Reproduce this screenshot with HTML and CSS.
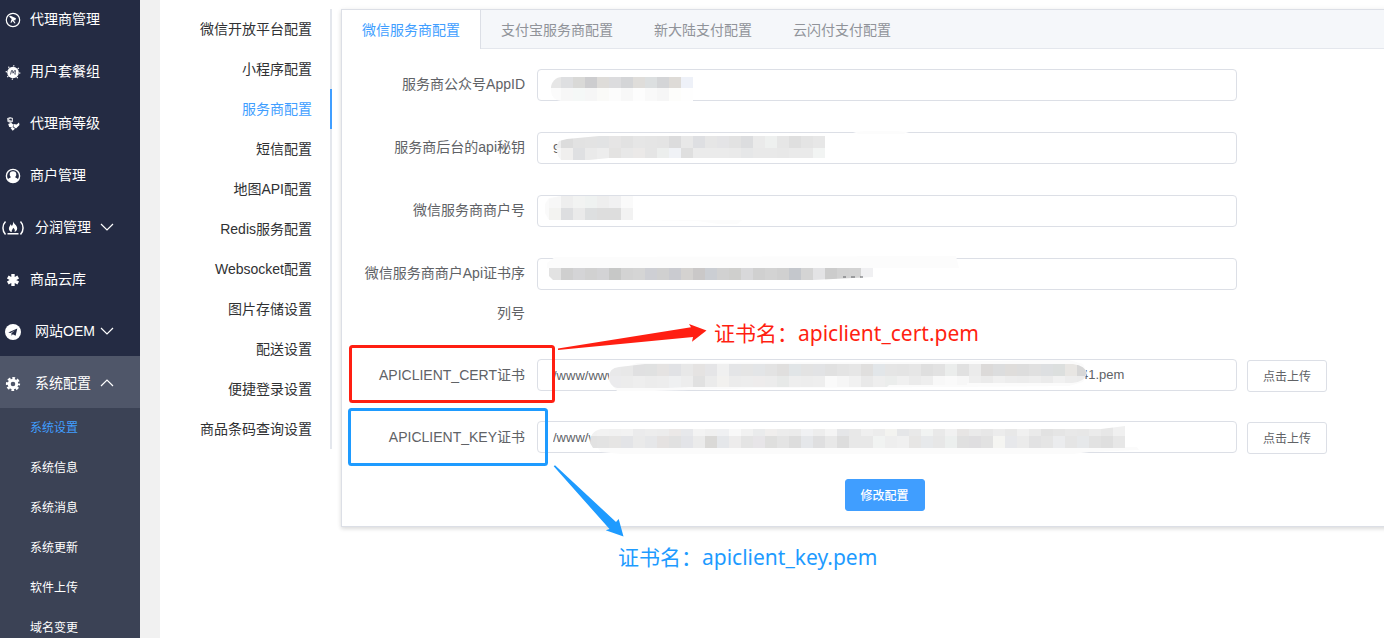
FILE: index.html
```html
<!DOCTYPE html>
<html lang="zh-CN">
<head>
<meta charset="utf-8">
<title>系统设置</title>
<link rel="stylesheet" href="styles.css">
</head>
<body>
<div class="app">
  <nav class="sidebar" aria-label="主菜单">
    <a class="item" href="#"><svg class="icon" viewBox="0 0 16 16"><circle cx="8" cy="8" r="6.7" fill="none" stroke="currentColor" stroke-width="1.2"/><path d="M4 4.500l1.500-.8 5.500 2.500-.8 2.300-1.700-.5 2 3-.7.500-2.300-2.500-1.300 2-.7-.5 1.200-3.500z" fill="currentColor"/></svg>代理商管理</a>
    <a class="item" href="#"><svg class="icon" viewBox="0 0 16 16"><circle cx="8" cy="8.500" r="5.800" fill="currentColor"/><circle cx="8" cy="8.500" r="6.700" fill="none" stroke="currentColor" stroke-width="1.300" stroke-dasharray="1.200 4.060"/><path d="M5.500 10.500l1-3.900 1.100 0 .4 2.600 1.500-2.600h1l-.7 3.600 1-.2" fill="none" stroke="#242b43" stroke-width=".8"/></svg>用户套餐组</a>
    <a class="item" href="#"><svg class="icon" viewBox="0 0 16 16"><path d="M2 2.200l3-1.200 3 1v3.700L5.400 7 2.500 5.800z" fill="currentColor" opacity=".8"/><path d="M3.200 8l3-1.200 2 1.700-.6 2.900-3.400-.4zM8.500 8l3.200.5 2.300-2 .5 2.500-3.500 3.500-2.500-1.800zM5.500 12l2.500-.8 2 1.500-2.300 2z" fill="currentColor"/><path d="M3.800 3.600l2.200-1 1 1-.5 1.200z" fill="#242b43"/></svg>代理商等级</a>
    <a class="item" href="#"><svg class="icon" viewBox="0 0 16 16"><circle cx="8" cy="8" r="6.600" fill="none" stroke="currentColor" stroke-width="1.400"/><path d="M8 3.200a3.300 3.300 0 0 1 3.300 3.300c0 1.200-.5 2-1.200 2.600 0 .9 2.400.8 3.100 2.600A6.500 6.500 0 0 1 8 14.600a6.500 6.500 0 0 1-5.200-2.900C3.500 9.900 5.900 10 5.900 9.100 5.200 8.500 4.700 7.700 4.700 6.500A3.300 3.300 0 0 1 8 3.200z" fill="currentColor"/></svg>商户管理</a>
    <a class="item group" href="#"><svg class="icon" viewBox="0 0 24 16"><path d="M4.500 1.500C1.100 5 1.100 11 4.500 14.500M19.500 1.500c3.400 3.500 3.400 9.500 0 13" fill="none" stroke="currentColor" stroke-width="1.500"/><path d="M12 1c.3 2.700 4.200 4 4.200 7.300 0 2-1.400 3.400-2.700 3.700.8-1.700.2-2.900-1.300-4.200-.2 1.600-2 2.200-1.400 4.200C9 11.600 7.800 10.300 7.900 8.400 8 6.600 9.300 6 9.500 4.300c.9.500 1.200 1.200 1.200 2C12.200 4.800 12.300 3 12 1zM6.500 13h11v1.600h-11z" fill="currentColor"/></svg>分润管理<svg class="chevron" viewBox="0 0 14 8"><path d="M1 1l6 6 6-6"/></svg></a>
    <a class="item" href="#"><svg class="icon" viewBox="0 0 16 16"><path d="M8 2v12M2.800 5l10.400 6M13.200 5L2.800 11" fill="none" stroke="currentColor" stroke-width="3.400"/></svg>商品云库</a>
    <a class="item group" href="#"><svg class="icon" viewBox="0 0 24 16"><circle cx="12" cy="8" r="8" fill="currentColor"/><path d="M7.300 8.400l9-3.900-1.700 7.300-2.800-1.500-1.200 1.500-.2-2.500 3.600-3-4.500 2.700z" fill="#242b43"/></svg>网站OEM<svg class="chevron" viewBox="0 0 14 8"><path d="M1 1l6 6 6-6"/></svg></a>
    <a class="item group open" href="#"><svg class="icon" viewBox="0 0 24 16"><circle cx="12" cy="8" r="3.800" fill="none" stroke="currentColor" stroke-width="3"/><circle cx="12" cy="8" r="5.900" fill="none" stroke="currentColor" stroke-width="2.400" stroke-dasharray="2.700 1.934" stroke-dashoffset="1.350"/></svg>系统配置<svg class="chevron" viewBox="0 0 14 8"><path d="M1 7l6-6 6 6"/></svg></a>
    <div class="submenu">
      <a class="current" href="#">系统设置</a>
      <a href="#">系统信息</a>
      <a href="#">系统消息</a>
      <a href="#">系统更新</a>
      <a href="#">软件上传</a>
      <a href="#">域名变更</a>
    </div>
  </nav>

  <main class="content">
    <nav class="side-tabs" aria-label="配置分类">
      <a href="#">微信开放平台配置</a>
      <a href="#">小程序配置</a>
      <a class="current" href="#">服务商配置</a>
      <a href="#">短信配置</a>
      <a href="#">地图API配置</a>
      <a href="#">Redis服务配置</a>
      <a href="#">Websocket配置</a>
      <a href="#">图片存储设置</a>
      <a href="#">配送设置</a>
      <a href="#">便捷登录设置</a>
      <a href="#">商品条码查询设置</a>
    </nav>

    <section class="card">
      <nav class="tabs" aria-label="服务商">
        <a class="current" href="#">微信服务商配置</a>
        <a href="#">支付宝服务商配置</a>
        <a href="#">新大陆支付配置</a>
        <a href="#">云闪付支付配置</a>
      </nav>
      <form class="form">
        <div class="row">
          <label for="appid">服务商公众号AppID</label>
          <div class="field"><input id="appid" type="text">
            <svg class="mosaic" aria-hidden="true"><clipPath id="c1"><path d="M156 8H25a11 11 0 0 0-11 11v3a10 10 0 0 0 10 10h132z"/></clipPath><g clip-path="url(#c1)" data-mosaic="appid"></g></svg></div>
        </div>
        <div class="row">
          <label for="apikey">服务商后台的api秘钥</label>
          <div class="field"><input id="apikey" type="text" value="9">
            <svg class="mosaic" aria-hidden="true"><path d="M316 0l14-1h28l14 1-6 2h-44z" fill="#fcfcfc"/><clipPath id="c2"><path d="M288 4H62L30 7l-8 2-3 6 2 9 3 4h28l20-2h216z"/></clipPath><g clip-path="url(#c2)" data-mosaic="apikey"></g></svg></div>
        </div>
        <div class="row">
          <label for="mchid">微信服务商商户号</label>
          <div class="field"><input id="mchid" type="text">
            <svg class="mosaic" aria-hidden="true"><path d="M96 1H24L12 3 8 9v9l4 7h84z" fill="#fafafa"/><path d="M90 25h115l-5 4h-18l-22-3z" fill="#fcfcfc"/><clipPath id="c3"><path d="M96 1H24L12 4v21h84z"/></clipPath><g clip-path="url(#c3)" data-mosaic="mchid"></g></svg></div>
        </div>
        <div class="row">
          <label for="serial">微信服务商商户Api证书序列号</label>
          <div class="field"><input id="serial" type="text">
            <svg class="mosaic" aria-hidden="true"><path d="M18-1L419-2l3 12H10V5z" fill="#fcfcfc"/><clipPath id="c4"><path d="M12 10h324v9l-60 3H16l-4-4z"/></clipPath><g clip-path="url(#c4)" data-mosaic="serial"></g><path d="M306 19h3M314 19h4M323 19h3" stroke="#606266"/></svg></div>
        </div>
        <div class="row upload">
          <label for="cert">APICLIENT_CERT证书</label>
          <div class="field"><input id="cert" type="text" value="/www/www"><span class="tail">41.pem</span>
            <svg class="mosaic" aria-hidden="true"><path d="M100 4l300-1 100-2h32l14 4 4 9-4 9-14 4-120 1-190 1-105 3H80l-8-10V15z" fill="#fbfbfb"/><clipPath id="c5"><path d="M108 5h428q14 2 13 10t-14 9H430v2H352l-2 2H152l-22 1H80q-8-2-8-11t10-10z"/></clipPath><g clip-path="url(#c5)" data-mosaic="cert"></g></svg></div>
          <button type="button">点击上传</button>
        </div>
        <div class="row upload">
          <label for="key">APICLIENT_KEY证书</label>
          <div class="field"><input id="key" type="text" value="/www/www">
            <svg class="mosaic" aria-hidden="true"><path d="M60 26h540l2 3-50 2-16 2H84l-20-2z" fill="#fbfbfb"/><clipPath id="c6"><path d="M64 8h500l24-3v22H56l-3-5q0-12 11-14z"/></clipPath><g clip-path="url(#c6)" data-mosaic="key"></g></svg></div>
          <button type="button">点击上传</button>
        </div>
        <button class="primary" type="submit">修改配置</button>
      </form>
    </section>
  </main>

  <div class="notes">
    <svg aria-hidden="true"><g fill="none" stroke-width="3"><rect x="350.500" y="346.500" width="203" height="55" rx="2" stroke="#ff1f12"/><rect x="349.500" y="409.500" width="197" height="55" rx="2" stroke="#1e9bff"/></g><path d="M558 348.500L691 327.300 689 324 706.500 330.500 692 341.700 693 337 558 350z" fill="#ff1f12"/><path d="M555 465.300L616 522 618.700 519 623.500 536.500 605.700 530.300 609.500 529 553.700 466.300z" fill="#1e9bff"/></svg>
    <p class="note cert-note">证书名：apiclient_cert.pem</p>
    <p class="note key-note">证书名：apiclient_key.pem</p>
  </div>
</div>
<script src="script.js"></script>
</body>
</html>
```
FILE: styles.css
```css
* { box-sizing: border-box; }
body {
  margin: 0;
  font: 14px "Liberation Sans", "Noto Sans CJK SC", sans-serif;
  color: #303133;
  background: #fff;
}
a { color: inherit; text-decoration: none; }
.app { position: relative; display: flex; height: 100vh; overflow: hidden; }

.sidebar { flex: none; width: 140px; background: #242b43; color: #fff; overflow: hidden; }
.item { display: flex; align-items: center; height: 52px; padding: 0 26px 0 5px; }
.item:first-child { margin-top: -8px; }
.item .icon { flex: none; width: 16px; height: 16px; margin: 3px 9px 0 0; }
.item.group { padding-left: 1px; }
.item.group .icon { width: 24px; margin-right: 10px; }
.item.open { background: #4f5669; }
.chevron { width: 14px; height: 8px; margin: 2px 0 0 auto; fill: none; stroke: #fff; stroke-width: 1.2; }
.submenu { background: #3b4255; font-size: 12px; }
.submenu a { display: block; height: 40px; line-height: 40px; padding-left: 30px; }
.submenu .current { color: #409eff; }

.content {
  display: flex;
  flex: 1;
  align-items: flex-start;
  min-width: 0;
  padding: 9px 0 0 20px;
  border-left: 20px solid #f1f1f1;
  overflow: hidden;
}
.side-tabs { flex: none; margin-right: 9px; text-align: right; border-right: 2px solid #e4e7ed; }
.side-tabs a { display: block; height: 40px; line-height: 40px; padding: 0 18px 0 20px; margin-right: -2px; border-right: 2px solid transparent; }
.side-tabs .current { color: #409eff; border-color: #409eff; }

.card {
  flex: 1;
  min-width: 0;
  margin-right: -44px;
  border: 1px solid #dcdfe6;
  box-shadow: 0 2px 4px rgba(0, 0, 0, .12), 0 0 6px rgba(0, 0, 0, .04);
}
.tabs { display: flex; background: #f5f7fa; border-bottom: 1px solid #e4e7ed; color: #909399; }
.tabs a { height: 38px; line-height: 40px; padding: 0 20px; border-right: 1px solid transparent; }
.tabs .current { margin-bottom: -1px; height: 39px; background: #fff; color: #409eff; border-color: #dcdfe6; }

.form { display: flex; flex-direction: column; gap: 22px; padding: 15px; color: #606266; }
.row { display: flex; align-items: flex-start; min-height: 41px; }
.row.upload { min-height: 40px; }
.row label { flex: none; width: 180px; padding-right: 12px; line-height: 40px; text-align: right; }
.field { position: relative; flex: 0 1 700px; height: 32px; margin-top: 5px; }
.upload .field { margin-top: 4px; }
.field input {
  width: 100%;
  height: 32px;
  padding: 0 15px;
  border: 1px solid #dcdfe6;
  border-radius: 4px;
  background: #fff;
  color: #606266;
  font: 13px "Liberation Sans", sans-serif;
}
.tail { position: absolute; left: 544px; top: 0; font-size: 13px; line-height: 32px; }
.mosaic { position: absolute; left: 0; top: 0; width: 100%; height: 100%; overflow: visible; pointer-events: none; }
button {
  width: 80px;
  height: 32px;
  padding: 0 0 2px;
  border: 1px solid #dcdfe6;
  border-radius: 3px;
  background: #fff;
  color: #606266;
  font: 12px "Liberation Sans", "Noto Sans CJK SC", sans-serif;
}
.row button { margin: 5px 0 0 10px; }
.primary { align-self: center; border-color: #409eff; background: #409eff; color: #fff; font-weight: 500; }

.notes { position: absolute; inset: 0; pointer-events: none; }
.notes svg { width: 100%; height: 100%; }
.note {
  position: absolute;
  margin: 0;
  font: 21px/30px "Noto Sans", "Noto Sans CJK SC", sans-serif;
  white-space: nowrap;
}
.cert-note { left: 714px; top: 318px; color: #ff1f12; }
.key-note { left: 618px; top: 542px; color: #1e9bff; }
```
FILE: script.js
```js
// Masked values: each band is [top, height, first column x, tile shades].
const bands = {
  appid: [
    [8, 11, 12, 'e6 dedfe1 d9d9d7 cdcdcf dedcd9 dcdcde d4d5d7 dfddda dcdfe0 d4d5d7 dedbd7 eef1f8'],
    [19, 13, 12, 'fb f7 f5f8f7 f6 fafaf8 fc f8 fd f9 f6 fdfdfb fe']
  ],
  apikey: [
    [4, 12, 12, 'ee dc e2 e3 e2e3e4 e6e5e5 e2 e6 e5 e4 dcdcdd e8 dedfe2 e6 e4e4e6 e2 dcdddf ea eef0ef e6 df e4 e7'],
    [16, 12, 12, 'f6 f0efee dfe0e2 ea ed e4e3e2 e8 ebe9e8 e5 eceeed f0f2f6 df eb eb eb ea e6e7e8 e9 e9 e8 ea ea f2f4f3']
  ],
  mchid: [
    [1, 12, 12, 'f7 ee f2f3f2 eff2f1 ee f1f1f2 fa'],
    [13, 12, 12, 'f3f3f1 dddee0 ea dddfe0 dd dd f2']
  ],
  serial: [
    [10, 12, 12, 'e2 cf d4d4d6 d1 d3d3d5 c7c8c7 d3 d5 cecfd4 d0 cacbd0 d4d2d0 cac8c8 cbced3 d1 cfcfcd d8d8da d0 d3 d0 c4c7cc d4 e3e3e5 cc d2 d3 f0f0f2']
  ],
  cert: [
    [5, 12, 72, 'e9e9ea e8 e0e0e1 e0e1e1 e5e3e2 e1e2e5 e8 e5e3e2 e5e5e7 f0 e4e5e7 e5 e3e5e7 e3 e0dfde e1e5e7 e3 e2e3e5 e1 e4 e6 e0dfde e2e6e9 e5 e4 e6 df e2 ebedec e1 eb dcdad9 dcddde dfdddb dd e0 dddfe1 dcdfde e8e6e3 d7 de e0e2e3 d8d6d5 dadbdc'],
    [17, 12, 72, 'ebebed ec ee ec ed eff0f1 ed e1 eb f2f1ef ec ed eeecec ec e7e9e8 ee ed ee fa f6 f1 e9 ee ebedec f0 eb ee f8 fa f7 ee eb f0 ed ec ee eb f1 ed ec ed']
  ],
  key: [
    [4, 11, 48, 'f1 f2 f1 f2 ebebec ed ec ebe8e7 e7e8eb f3 f0 eff0f2 f8 f1 eaebec f0eeed ec eb f0f1f3 ed f4 e5e6e8 e8 ef ec f3f3f0 e5e6e8 e9 f1f3f2 e9 f1 e7e5e4 ea e7 ec e8 f0 ea e2 e5 e8 e7 eb e7 f0'],
    [15, 12, 48, 'e2 e3 e6e5e4 e3e4e7 ea e6e7e9 e5e2e1 e1 e3e4e8 eb dad9d7 e5e7ea edecec e4 e7e5e8 dfdfde e4 dd e5e7ea dfdfe0 e8 dd e8 e8 f1f3f2 ee f0 e7e6e5 e7e9eb e7 ecefee e0 dfdee0 e2 f5f5f2 e7e8eb eb e2e2e3 e5 ebecee e5 e6e8ea e2 df e7']
  ]
};

for (const [name, rows] of Object.entries(bands)) {
  const group = document.querySelector(`[data-mosaic="${name}"]`);
  for (const [top, height, left, shades] of rows) {
    shades.split(' ').forEach((shade, i) => {
      const tile = document.createElementNS('http://www.w3.org/2000/svg', 'rect');
      tile.setAttribute('x', left + i * 12);
      tile.setAttribute('y', top);
      tile.setAttribute('width', 12);
      tile.setAttribute('height', height);
      tile.setAttribute('fill', '#' + (shade.length === 2 ? shade.repeat(3) : shade));
      tile.setAttribute('shape-rendering', 'crispEdges');
      group.append(tile);
    });
  }
}
```
